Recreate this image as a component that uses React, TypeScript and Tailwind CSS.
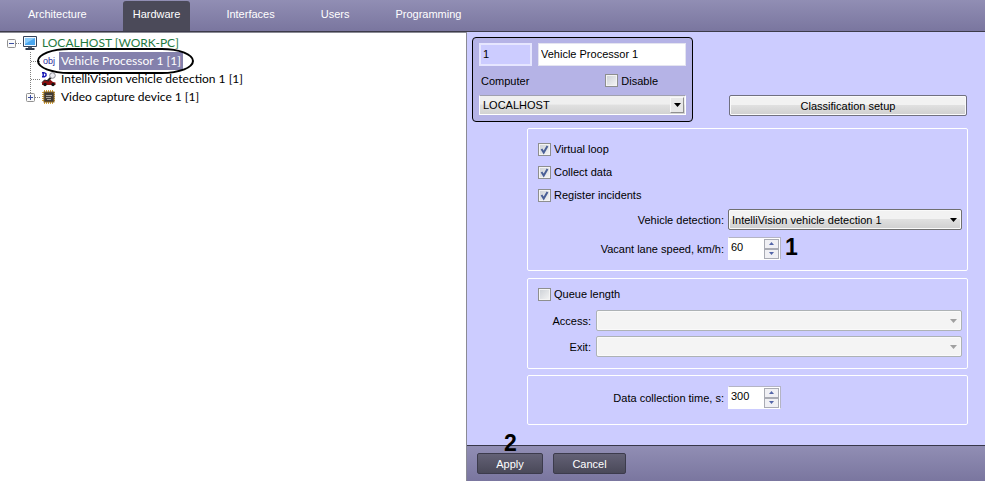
import React, { useState } from 'react';

const UI_FONT = "font-['Liberation_Sans',Arial,sans-serif]";

const tabs = ['Architecture', 'Hardware', 'Interfaces', 'Users', 'Programming'];

const MonitorIcon = () => (
  <svg width="16" height="16" viewBox="0 0 16 16" className="shrink-0">
    <rect x="1" y="1" width="14" height="11" rx="1" fill="#34435a" />
    <rect x="2" y="2" width="12" height="9" fill="#f2f8ff" />
    <rect x="3" y="3" width="10" height="7" fill="#4aa6ee" />
    <path d="M3 3h10L3 9z" fill="#8accfb" />
    <path d="M6 12h4v1H6z" fill="#5a6678" />
    <path d="M3.5 13h9v2h-9z" fill="#2f3a4c" />
  </svg>
);

const ObjIcon = () => (
  <span className={`w-4 shrink-0 text-center text-[9px] leading-4 text-[#2a2a9c] ${UI_FONT}`}>obj</span>
);

const DetectorIcon = () => (
  <svg width="16" height="16" viewBox="0 0 16 16" className="shrink-0">
    <path d="M1 1.7h2.5M2.2 1.7v4M1 5.7h2.5L5 4.6V2.8L3.5 1.7" fill="none" stroke="#1414b4" strokeWidth="1.4" />
    <path d="M1 11.5l2.5-2.5 4 1 1.5-1.5 3 2.5 2.5.5V14H1z" fill="#8c1010" />
    <path d="M1 11.5l2.5-2.5 4 1" fill="none" stroke="#222" />
    <path d="M6.5 10L10 6.5" stroke="#222" strokeWidth="2" />
    <circle cx="11.5" cy="4.5" r="2.8" fill="#ececf2" stroke="#8a8a92" />
    <circle cx="4" cy="13.5" r="1.7" fill="#111" />
    <circle cx="12" cy="13.5" r="1.7" fill="#111" />
  </svg>
);

const ChipIcon = () => (
  <svg width="16" height="16" viewBox="0 0 16 16" className="shrink-0">
    <path
      d="M3.5 1v14M5.5 1v14M7.5 1v14M9.5 1v14M11.5 1v14M1 3.5h13M1 5.5h13M1 7.5h13M1 9.5h13M1 11.5h13"
      stroke="#d2a23a"
    />
    <rect x="3" y="3" width="10" height="10" fill="#3f3a36" stroke="#8a6420" />
    <path d="M5 6.5h6M5 8.5h5M6 10.5h4" stroke="#a8a098" />
  </svg>
);

interface TreeNode {
  label: string;
  level: number;
  expander?: 'plus' | 'minus';
  last?: boolean;
  icon: React.ReactNode;
}

const nodes: TreeNode[] = [
  { label: 'LOCALHOST [WORK-PC]', level: 0, expander: 'minus', icon: <MonitorIcon /> },
  { label: 'Vehicle Processor 1 [1]', level: 1, icon: <ObjIcon /> },
  { label: 'IntelliVision vehicle detection 1 [1]', level: 1, icon: <DetectorIcon /> },
  { label: 'Video capture device 1 [1]', level: 1, expander: 'plus', last: true, icon: <ChipIcon /> },
];

const Connector: React.FC<{ node: TreeNode }> = ({ node }) => (
  <svg width="20" height="18" viewBox="0 0 20 18" className="shrink-0">
    {node.level > 0 && <path d={node.last ? 'M9.5 0v9' : 'M9.5 0v18'} stroke="#808080" strokeDasharray="1 1" />}
    <path d="M10 9.5h10" stroke="#808080" strokeDasharray="1 1" />
    {node.expander && (
      <>
        <rect x="5.5" y="5.5" width="8" height="8" rx="1" fill="#fafafa" stroke="#919191" />
        <path d={node.expander === 'plus' ? 'M7 9.5h5M9.5 7v5' : 'M7 9.5h5'} stroke="#3c4fa0" />
      </>
    )}
  </svg>
);

const ObjectTree = () => {
  const [selected, setSelected] = useState(1);
  return (
    <ul className="pt-px font-[Lato,'Open_Sans',sans-serif] text-[12px]">
      {nodes.map((node, i) => (
        <li key={node.label} className={`relative flex h-[18px] items-center ${node.level ? 'pl-[21px]' : 'pl-0.5'}`}>
          <Connector node={node} />
          {node.icon}
          <button
            onClick={() => setSelected(i)}
            className={`ml-0.5 px-0.5 leading-[18px] whitespace-nowrap ${
              selected === i ? 'bg-[#8481ac] text-white' : node.level ? 'text-black' : 'text-[#1f7a3f]'
            }`}
          >
            {node.label}
          </button>
          {i === 1 && (
            <span className="pointer-events-none absolute -top-1 left-[37px] z-10 h-[26px] w-[157px] rounded-[32px/13px] border-2 border-black" />
          )}
        </li>
      ))}
    </ul>
  );
};

const Check: React.FC<{ label: string; checked?: boolean }> = ({ label, checked }) => (
  <label className="flex items-center gap-[3px] leading-4">
    <span className="relative size-[13px]">
      <input
        type="checkbox"
        defaultChecked={checked}
        className="peer block size-[13px] appearance-none border border-[#8e8f8f] bg-linear-to-br from-[#cbcfd5] to-[#f6f6f6] shadow-[inset_0_0_0_1px_#f4f4f4]"
      />
      <svg viewBox="0 0 13 13" className="pointer-events-none absolute inset-0 hidden peer-checked:block">
        <path d="M3.5 6l2.2 3.5L9.5 3" fill="none" stroke="#4a5f97" strokeWidth="2" />
      </svg>
    </span>
    {label}
  </label>
);

const Arrow: React.FC<{ className: string }> = ({ className }) => (
  <svg width="7" height="4" viewBox="0 0 7 4" className={className}>
    <path d="M0 0h7L3.5 4z" fill="currentColor" />
  </svg>
);

const Select: React.FC<{ id: string; options?: string[]; disabled?: boolean }> = ({ id, options = [], disabled }) => (
  <div className="relative min-w-0 flex-1">
    <select
      id={id}
      disabled={disabled}
      className="block h-[21px] w-full appearance-none rounded-xs border border-[#707070] bg-linear-to-b from-[#f2f2f2] from-45% via-[#e0e0e0] via-50% to-[#cfcfcf] px-[3px] shadow-[inset_0_0_0_1px_#fafafa] disabled:border-[#adb2b5] disabled:bg-[#f4f4f4] disabled:bg-none disabled:opacity-100"
    >
      {options.map((o) => (
        <option key={o}>{o}</option>
      ))}
    </select>
    <Arrow className={`pointer-events-none absolute top-[9px] right-[5px] ${disabled ? 'text-[#a0a0a0]' : 'text-black'}`} />
  </div>
);

const Spinner: React.FC<{ id: string; initial: number }> = ({ id, initial }) => {
  const [value, setValue] = useState(initial);
  const step = 'flex h-[10px] w-[15px] items-center justify-center border border-[#a9abb4] bg-[#f0f0f4] text-[#5365a8]';
  return (
    <div className="flex h-[23px] w-[53px] border border-[#b4b4c4] border-b-white border-l-white bg-white">
      <input
        id={id}
        value={value}
        onChange={(e) => setValue(Number(e.target.value) || 0)}
        className="h-[17px] min-w-0 flex-1 pl-0.5 outline-none"
      />
      <div className="flex flex-col justify-center pr-px">
        <button aria-label="Increase" className={step} onClick={() => setValue(value + 1)}>
          <svg width="5" height="3" viewBox="0 0 5 3"><path d="M0 3h5L2.5 0z" fill="currentColor" /></svg>
        </button>
        <button aria-label="Decrease" className={step} onClick={() => setValue(value - 1)}>
          <svg width="5" height="3" viewBox="0 0 5 3"><path d="M0 0h5L2.5 3z" fill="currentColor" /></svg>
        </button>
      </div>
    </div>
  );
};

const Group: React.FC<{ className: string; children: React.ReactNode }> = ({ className, children }) => (
  <section className={`ml-[55px] rounded-xs border border-white pr-[5px] pl-px ${className}`}>{children}</section>
);

const ObjectHeader = () => (
  <div className="w-[221px] rounded-[4px] border border-black bg-[#b5b3e6] px-1.5 pt-[5px] pb-1.5">
    <div className="flex gap-1.5">
      <input
        aria-label="Number"
        readOnly
        defaultValue="1"
        className="h-[23px] w-[53px] border-2 border-[#e6e6ff] bg-[#ccccff] px-0.5 pb-0.5 outline-none"
      />
      <input
        aria-label="Name"
        defaultValue="Vehicle Processor 1"
        className="h-[23px] min-w-0 flex-1 border border-[#e4e4f0] bg-white px-0.5 pb-0.5 outline-none"
      />
    </div>
    <div className="flex h-[29px] items-center justify-between pr-7 pl-0.5">
      <label htmlFor="computer">Computer</label>
      <Check label="Disable" />
    </div>
    <div className="relative">
      <select
        id="computer"
        className="block h-5 w-full appearance-none border border-white border-t-[#a0a0b0] bg-linear-to-b from-[#efefef] from-45% via-[#e0e0e0] via-50% to-[#d2d2d2] px-[3px]"
      >
        <option>LOCALHOST</option>
      </select>
      <span className="pointer-events-none absolute top-0.5 right-0.5 flex h-4 w-[14px] items-center justify-center border border-[#f8f8f8] border-r-[#909090] border-b-[#909090] bg-[#e8e8e8]">
        <Arrow className="text-black" />
      </span>
    </div>
  </div>
);

const SettingsPanel = () => (
  <main className="flex-1 bg-[#ccccff] pt-[5px] pr-[17px] pb-5 pl-[5px]">
    <div className="flex items-end justify-between pr-px pb-1.5">
      <ObjectHeader />
      <button className="mb-1.5 h-[21px] w-[238px] rounded-xs border border-[#707080] bg-linear-to-b from-[#f2f2f2] from-45% via-[#e0e0e0] via-50% to-[#cfcfcf] shadow-[inset_0_0_0_1px_#fafafa]">
        Classification setup
      </button>
    </div>

    <Group className="pt-3 pb-[10px]">
      <div className="flex flex-col gap-[7px] pl-[9px]">
        <Check label="Virtual loop" checked />
        <Check label="Collect data" checked />
        <Check label="Register incidents" checked />
      </div>
      <div className="mt-[6px] flex items-center gap-1">
        <label htmlFor="detection" className="w-[195px] text-right">Vehicle detection:</label>
        <Select id="detection" options={['IntelliVision vehicle detection 1']} />
      </div>
      <div className="mt-[7px] flex items-center gap-1">
        <label htmlFor="speed" className="w-[195px] text-right">Vacant lane speed, km/h:</label>
        <Spinner id="speed" initial={60} />
        <b className="-mt-1 text-[23px] leading-4">1</b>
      </div>
    </Group>

    <Group className="mt-[7px] pt-[7px] pb-[11px]">
      <div className="pl-[9px]">
        <Check label="Queue length" />
      </div>
      <div className="mt-2 flex items-center gap-[5px]">
        <label htmlFor="access" className="w-[62px] text-right">Access:</label>
        <Select id="access" disabled />
      </div>
      <div className="mt-[5px] flex items-center gap-[5px]">
        <label htmlFor="exit" className="w-[62px] text-right">Exit:</label>
        <Select id="exit" disabled />
      </div>
    </Group>

    <Group className="mt-[6px] pt-[10px] pb-[15px]">
      <div className="flex items-center gap-1">
        <label htmlFor="collection" className="w-[195px] text-right">Data collection time, s:</label>
        <Spinner id="collection" initial={300} />
      </div>
    </Group>
  </main>
);

const ActionBar = () => {
  const button = 'h-[21px] rounded-xs border border-[#3c3b4c] bg-linear-to-b from-[#636175] to-[#4a4959] text-white';
  return (
    <footer className="flex h-9 items-center gap-2.5 border-t border-[#38374a] bg-linear-to-b from-[#918eb4] to-[#7a769f] pl-2.5">
      <div className="relative">
        <button className={`w-[66px] ${button}`}>Apply</button>
        <b className="absolute -top-[22px] left-[27px] text-[23px] leading-6 text-black">2</b>
      </div>
      <button className={`w-[73px] ${button}`}>Cancel</button>
    </footer>
  );
};

const App: React.FC = () => {
  const [tab, setTab] = useState('Hardware');

  return (
    <div className={`flex min-h-screen flex-col text-[11px] leading-4 text-black ${UI_FONT}`}>
      <nav className="flex h-8 border-b border-[#3c3b4a] bg-linear-to-b from-[#918eb4] to-[#7a769f] pt-px pl-[18px] text-white">
        {tabs.map((name) => (
          <button
            key={name}
            onClick={() => setTab(name)}
            className={`mr-[26px] rounded-t-[3px] px-2.5 pb-1 ${tab === name ? 'bg-[#4b4a59]' : ''}`}
          >
            {name}
          </button>
        ))}
      </nav>
      <div className="grid flex-1 grid-cols-[467fr_518fr]">
        <aside className="border-t border-r border-[#8a8a94] bg-white">
          <ObjectTree />
        </aside>
        <div className="flex min-w-0 flex-col">
          <SettingsPanel />
          <ActionBar />
        </div>
      </div>
    </div>
  );
};

export default App;
